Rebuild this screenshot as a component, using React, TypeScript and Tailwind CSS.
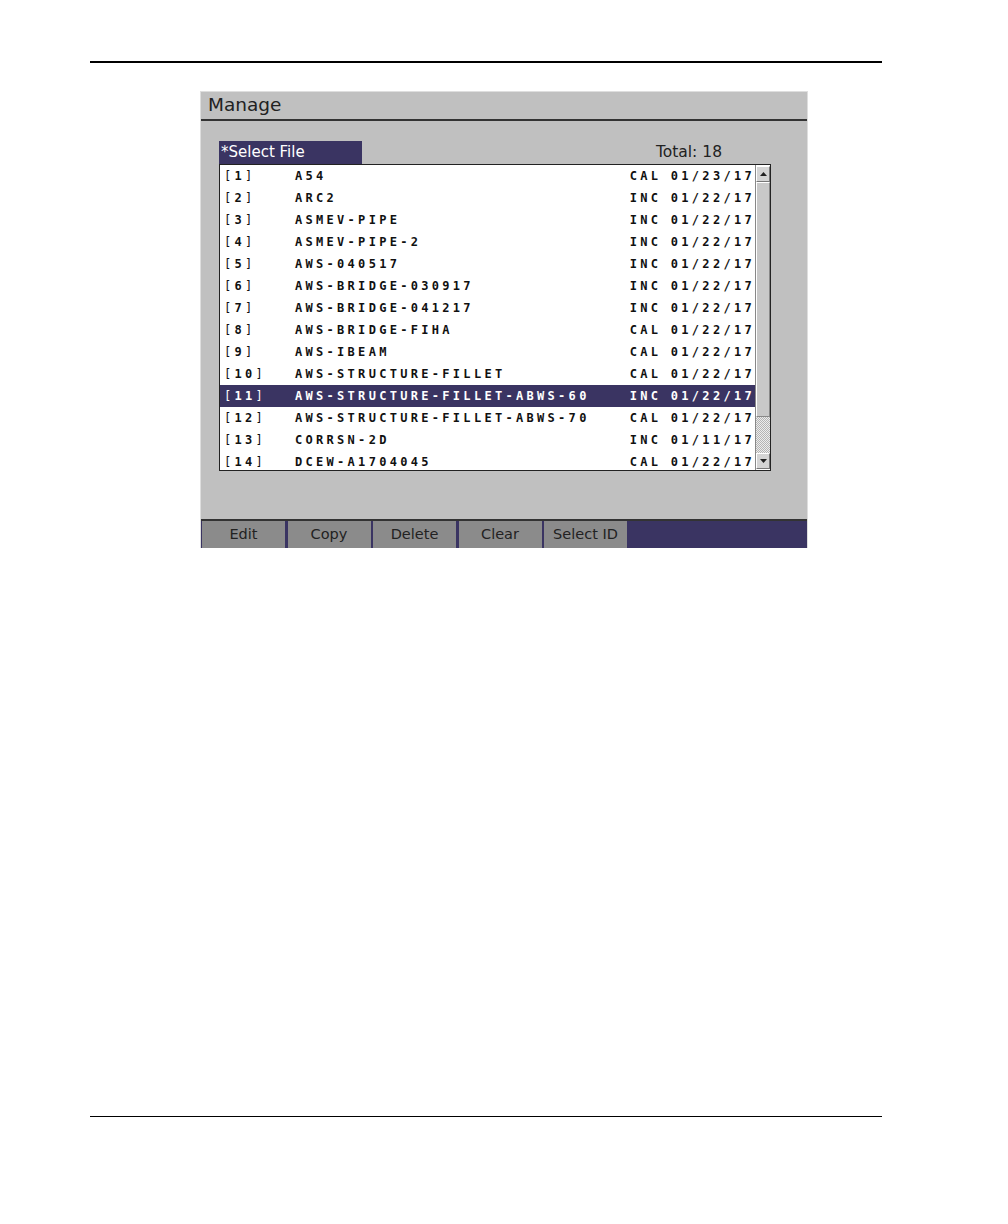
import React from "react";

const files = [
  { no: 1, name: "A54", type: "CAL", date: "01/23/17" },
  { no: 2, name: "ARC2", type: "INC", date: "01/22/17" },
  { no: 3, name: "ASMEV-PIPE", type: "INC", date: "01/22/17" },
  { no: 4, name: "ASMEV-PIPE-2", type: "INC", date: "01/22/17" },
  { no: 5, name: "AWS-040517", type: "INC", date: "01/22/17" },
  { no: 6, name: "AWS-BRIDGE-030917", type: "INC", date: "01/22/17" },
  { no: 7, name: "AWS-BRIDGE-041217", type: "INC", date: "01/22/17" },
  { no: 8, name: "AWS-BRIDGE-FIHA", type: "CAL", date: "01/22/17" },
  { no: 9, name: "AWS-IBEAM", type: "CAL", date: "01/22/17" },
  { no: 10, name: "AWS-STRUCTURE-FILLET", type: "CAL", date: "01/22/17" },
  { no: 11, name: "AWS-STRUCTURE-FILLET-ABWS-60", type: "INC", date: "01/22/17" },
  { no: 12, name: "AWS-STRUCTURE-FILLET-ABWS-70", type: "CAL", date: "01/22/17" },
  { no: 13, name: "CORRSN-2D", type: "INC", date: "01/11/17" },
  { no: 14, name: "DCEW-A1704045", type: "CAL", date: "01/22/17" },
];

const buttons = ["Edit", "Copy", "Delete", "Clear", "Select ID"];

export default function App() {
  return (
    <div className="w-[1008px] h-[1224px] bg-white flex flex-col font-['DejaVu_Sans',sans-serif]">
      {/* header rule */}
      <div className="mt-[61px] ml-[90px] w-[792px] h-[2px] bg-black" />

      {/* instrument screen */}
      <div className="mt-[28px] ml-[200px] w-[608px] h-[457px] bg-[#c0c0c0] border-t border-l border-r border-[#dedede] flex flex-col">
        <div className="h-[29px] border-b-2 border-[#333] pl-[7px] flex items-center">
          <span className="text-[18.5px] text-[#222] leading-none">Manage</span>
        </div>

        <div className="flex-1 pl-[18px] pt-[20px]">
          <div className="w-[552px] h-[23px] flex items-stretch justify-between">
            <div className="w-[143px] bg-[#3a3462] text-white text-[15px] pl-[2px] flex items-center leading-none">
              *Select File
            </div>
            <div className="mr-[49px] text-[15.5px] text-[#222] flex items-center leading-none">Total:&nbsp;18</div>
          </div>

          <div className="w-[552px] h-[307px] bg-white border border-[#222] flex overflow-hidden">
            <div className="w-[535px] flex flex-col overflow-hidden">
              {files.map((f) => (
                <FileRow key={f.no} file={f} selected={f.no === 11} />
              ))}
            </div>
            <Scrollbar />
          </div>
        </div>

        {/* soft keys */}
        <div className="h-[29px] bg-[#3a3462] border-t-2 border-[#333] flex gap-[2.5px] pl-[1px]">
          {buttons.map((b) => (
            <div key={b} className="w-[83px] bg-[#8b8b8b] text-[#222] text-[14.5px] flex items-center justify-center leading-none pb-[1px]">
              {b}
            </div>
          ))}
        </div>
      </div>

      <div className="mt-auto mb-[107px] ml-[90px] w-[792px] h-px bg-black" />
    </div>
  );
}

function FileRow({ file, selected }: { file: any; selected: boolean }) {
  const mono = "font-['DejaVu_Sans_Mono',monospace] text-[12px] tracking-[3.3px] whitespace-nowrap leading-none";
  return (
    <div className={`h-[22px] shrink-0 flex items-center pb-[1px] ${selected ? "bg-[#3a3462] text-white" : "text-[#111]"}`}>
      <span className={`${mono} w-[75px] pl-[4px]`}>
        <span className="font-normal">[</span>
        <span className="font-bold">{file.no}</span>
        <span className="font-normal">]</span>
      </span>
      <span className={`${mono} font-bold w-[335px]`}>{file.name}</span>
      <span className={`${mono} font-bold w-[41px]`}>{file.type}</span>
      <span className={`${mono} font-bold`}>{file.date}</span>
    </div>
  );
}

function Scrollbar() {
  return (
    <div className="w-[15px] flex flex-col bg-white border-l border-[#888]">
      <div className="h-[16px] mt-[1px] bg-[#d4d4d4] border border-t-white border-l-white border-r-[#777] border-b-[#777] flex items-center justify-center">
        <svg width="7" height="4" viewBox="0 0 7 4">
          <polygon points="0,4 7,4 3.5,0" fill="#222" />
        </svg>
      </div>
      <div className="h-[235px] bg-[#c8c8c8] border border-t-white border-l-white border-r-[#888] border-b-[#888]" />
      <div className="flex-1 bg-[repeating-conic-gradient(#b4b4b4_0_25%,#ececec_0_50%)] bg-[length:2px_2px]" />
      <div className="h-[16px] mb-[1px] bg-[#d4d4d4] border border-t-white border-l-white border-r-[#777] border-b-[#777] flex items-center justify-center">
        <svg width="7" height="4" viewBox="0 0 7 4">
          <polygon points="0,0 7,0 3.5,4" fill="#222" />
        </svg>
      </div>
    </div>
  );
}
